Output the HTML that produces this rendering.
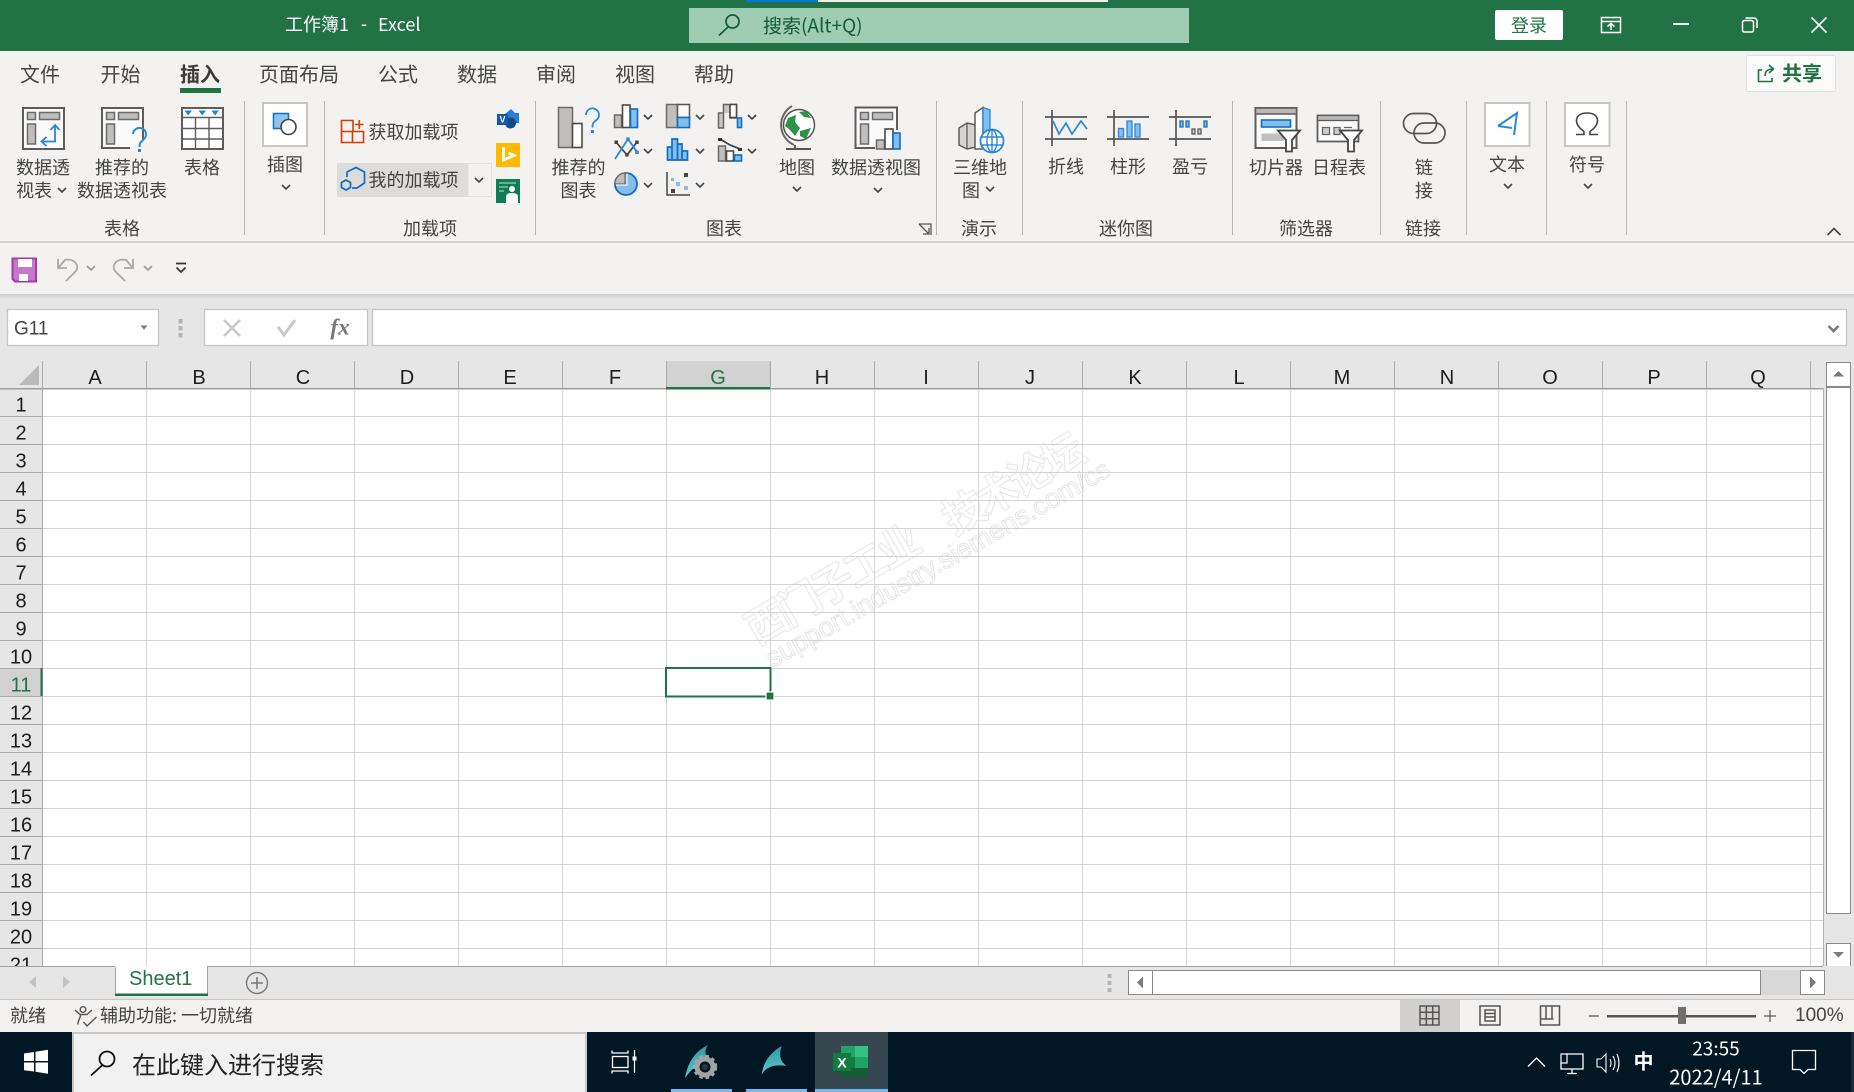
<!DOCTYPE html>
<html lang="zh-CN"><head><meta charset="utf-8"><title>工作簿1 - Excel</title>
<style>
html,body{margin:0;padding:0;background:#e6e6e6;width:1854px;height:1092px;overflow:hidden}
svg{display:block}
text{font-family:"Liberation Sans","Noto Sans CJK SC",sans-serif;dominant-baseline:central}
.c{font-family:"Noto Sans CJK SC","Liberation Sans",sans-serif;font-size:18px;fill:#444;text-anchor:middle}
.l{font-family:"Noto Sans CJK SC","Liberation Sans",sans-serif;font-size:18px;fill:#444}
.tab{font-family:"Noto Sans CJK SC","Liberation Sans",sans-serif;font-size:20px;fill:#444;text-anchor:middle}
.h{font-size:20px;fill:#1c1c1c;text-anchor:middle;dominant-baseline:auto}
.ic{fill:none;stroke:#5f5f5f;stroke-width:2}
.g{fill:#c0bfbe;stroke:#6a6a6a;stroke-width:1.5}
.w{fill:#fff;stroke:#4a4a4a;stroke-width:1.6}
.b{fill:#83beec;stroke:#106ebe;stroke-width:1.6}
.wm{font-family:"Noto Sans CJK SC",sans-serif;font-size:42px;font-weight:700;fill:#fff;stroke:#e6e6e6;stroke-width:1}
.wm2{font-size:27px;fill:#fff;stroke:#e6e6e6;stroke-width:1}
</style></head><body>
<svg width="1854" height="1092" viewBox="0 0 1854 1092" xmlns="http://www.w3.org/2000/svg">
<defs>
<path id="ch" d="M-4 -2 L0 2 L4 -2" fill="none" stroke="#444" stroke-width="1.6"/>
<clipPath id="gc"><rect x="0" y="388" width="1823" height="578"/></clipPath>
<linearGradient id="sh" x1="0" y1="0" x2="0" y2="1"><stop offset="0" stop-color="#cfcfcf"/><stop offset="1" stop-color="#e6e6e6"/></linearGradient>
<linearGradient id="fin" x1="0" y1="0" x2="0" y2="1"><stop offset="0" stop-color="#2f98a3"/><stop offset="1" stop-color="#62c5cc"/></linearGradient>
</defs>

<!-- title bar -->
<rect width="1854" height="51" fill="#217346"/>
<rect x="746" y="0" width="72" height="2" fill="#0078d4"/>
<rect x="818" y="0" width="290" height="2" fill="#f0f0f0"/>
<text x="285" y="24" font-size="18" fill="#fff" style="font-family:'Noto Sans CJK SC',sans-serif">工作簿1</text>
<text x="361" y="24" font-size="18" fill="#fff">-</text>
<text x="378" y="24" font-size="18" fill="#fff" style="font-family:'Noto Sans CJK SC',sans-serif">Excel</text>
<rect x="689" y="8" width="500" height="35" fill="#9fcdb3"/>
<circle cx="732.5" cy="21.5" r="6.5" fill="none" stroke="#14593a" stroke-width="1.7"/>
<path d="M728 27 L719 35.5" stroke="#14593a" stroke-width="1.7" fill="none"/>
<text x="763" y="25" font-size="19" fill="#14593a" style="font-family:'Noto Sans CJK SC',sans-serif">搜索(Alt+Q)</text>
<rect x="1495" y="10" width="68" height="30" rx="2" fill="#fff"/>
<text x="1529" y="25" font-size="18" fill="#217346" text-anchor="middle" style="font-family:'Noto Sans CJK SC',sans-serif">登录</text>
<g fill="none" stroke="#fff" stroke-width="1.5">
<rect x="1601.5" y="17.5" width="19" height="15"/><path d="M1601.5 21.5H1620.5M1611 30V23.5M1607.5 26.5L1611 23.5L1614.5 26.5"/>
<path d="M1673 24H1689" stroke-width="1.8"/>
<rect x="1742.5" y="20.5" width="11" height="11.5" rx="2"/><path d="M1745.5 18H1754a3 3 0 0 1 3 3V28"/>
<path d="M1811.5 17.5L1826.5 32.5M1826.5 17.5L1811.5 32.5" stroke-width="1.6"/>
</g>

<!-- ribbon -->
<rect y="51" width="1854" height="190" fill="#f3f2f1"/>
<rect y="241" width="1854" height="2" fill="#d2d0ce"/>
<rect y="243" width="1854" height="51" fill="#f3f2f1"/>
<rect y="294" width="1854" height="5" fill="url(#sh)"/>
<rect x="0" y="299" width="1854" height="62" fill="#e6e6e6"/>

<text class="tab" x="40" y="73">文件</text>
<text class="tab" x="120.500" y="73">开始</text>
<text class="tab" x="200" y="73" style="font-weight:700;fill:#3a3a3a">插入</text>
<rect x="180" y="88" width="41" height="5" fill="#217346"/>
<text class="tab" x="299" y="73">页面布局</text>
<text class="tab" x="398" y="73">公式</text>
<text class="tab" x="477" y="73">数据</text>
<text class="tab" x="556" y="73">审阅</text>
<text class="tab" x="635" y="73">视图</text>
<text class="tab" x="714" y="73">帮助</text>

<rect x="1746.500" y="55.500" width="89" height="36" rx="2" fill="#fbfbfb" stroke="#e1dfdd"/>
<path d="M1772 78V81.500H1758.500V70H1762M1765 76C1765 71 1768 69 1773 69M1769 65L1773.500 69L1769 73" fill="none" stroke="#217346" stroke-width="1.600"/>
<text x="1802" y="72" font-size="20" font-weight="700" fill="#217346" text-anchor="middle" style="font-family:'Noto Sans CJK SC',sans-serif">共享</text>

<!-- separators -->
<path d="M244.500 101V235M324.500 101V235M535.500 101V235M936.500 101V235M1022.500 101V235M1232.500 101V235M1380.500 101V235M1466.500 101V235M1546.500 101V235M1626.500 101V235" stroke="#b8b7b6" stroke-width="1"/>

<!-- pivot table icon -->
<rect x="23" y="108" width="41" height="41" fill="#fafafa" stroke="#5c5c5c" stroke-width="2"/>
<rect x="27.500" y="112.500" width="8" height="7" class="g"/><rect x="39.500" y="112.500" width="20" height="7" class="g"/><rect x="27.500" y="124" width="8" height="20" class="g"/>
<path d="M55 141.500V125.500M50.500 130L55 125L59.500 130M56 141.500H42M46.500 137L41.500 141.500L46.500 146" fill="none" stroke="#2b88d8" stroke-width="1.800"/>
<text class="c" x="43" y="167">数据透</text>
<text class="c" x="34" y="190">视表</text><use href="#ch" x="62" y="190"/>

<!-- recommended pivot -->
<path d="M143 139V108H102V148H130" fill="#fafafa" stroke="#5c5c5c" stroke-width="2"/>
<rect x="106.500" y="112.500" width="8" height="7" class="g"/><rect x="118.500" y="112.500" width="20" height="7" class="g"/><rect x="106.500" y="124" width="8" height="20" class="g"/>
<path d="M133 134a6.500 6.500 0 1 1 10.500 5.500c-3 2.800-4 3.800-4 7.500" fill="none" stroke="#2b88d8" stroke-width="2"/><rect x="138" y="149" width="3" height="3" fill="#2b88d8"/>
<text class="c" x="122" y="167">推荐的</text>
<text class="c" x="122" y="190">数据透视表</text>

<!-- table -->
<rect x="182" y="108" width="41" height="41" fill="#fff" stroke="#5c5c5c" stroke-width="2"/>
<path d="M182 117.500H223M182 128.500H223M182 139H223M195.500 117.500V149M209 117.500V149" stroke="#5c5c5c" stroke-width="1.400" fill="none"/>
<path d="M184.500 110.500H192L188.200 115.500ZM198.500 110.500H206L202.200 115.500ZM211.500 110.500H219L215.200 115.500Z" fill="#1e8ad6"/>
<text class="c" x="202" y="167">表格</text>
<text class="c" x="122" y="228">表格</text>

<!-- illustrations -->
<rect x="263" y="103" width="44" height="43" fill="#fff" stroke="#c8c6c4" stroke-width="2"/>
<rect x="273.500" y="113.500" width="15" height="15" fill="#90c4f0" stroke="#106ebe" stroke-width="1.500"/>
<circle cx="288.500" cy="127" r="7.500" fill="#fff" stroke="#444" stroke-width="1.600"/>
<text class="c" x="285" y="164">插图</text><use href="#ch" x="286" y="187"/>

<!-- add-ins -->
<path d="M341.500 120.500H353V131.500H363.500V142.500H341.500ZM341.500 131.500H353M352.500 131.500V142.500M355 124.500H363.500M359.300 120V129" fill="none" stroke="#d83b01" stroke-width="1.600"/>
<text class="l" x="368.500" y="131.500">获取加载项</text>
<rect x="337" y="163" width="131" height="34" fill="#dddcdb"/>
<rect x="468" y="163.500" width="23.500" height="33" fill="#f3f2f1" stroke="#e1dfdd"/>
<use href="#ch" x="479" y="180"/>
<path d="M347 177V172L356 167.500L364.500 172V183L357 188H352" fill="none" stroke="#106ebe" stroke-width="1.700"/>
<path d="M341.500 182.500L346 180L350.500 182.500V187.500L346 190L341.500 187.500Z" fill="none" stroke="#106ebe" stroke-width="1.700"/>
<text class="l" x="368.500" y="179.500">我的加载项</text>
<path d="M505 114L511 109L515 113H519V123H511Z" fill="#2b7cd3"/><circle cx="510.500" cy="123" r="5.500" fill="#0f4a8a"/><rect x="497" y="114" width="11" height="11" fill="#1457a8"/>
<text x="502.500" y="119.500" font-size="9" font-weight="700" fill="#fff" text-anchor="middle">V</text>
<rect x="496" y="143" width="24" height="24" fill="#ffb900"/>
<path d="M503.500 147V160L514 155.500L508.500 153" fill="none" stroke="#fff" stroke-width="2.800"/>
<rect x="496" y="179" width="24" height="24" fill="#107c57"/>
<path d="M499 183H516M499 187H508M499 191H504" stroke="#7fc4a8" stroke-width="1.500"/>
<circle cx="512" cy="189" r="3" fill="#fff"/><path d="M506 203V197Q506 193 512 193Q518 193 518 197V203Z" fill="#fff"/>
<text class="c" x="430" y="228">加载项</text>

<!-- charts -->
<rect x="558.500" y="107.500" width="14" height="40" class="g"/><rect x="572.500" y="123.500" width="9.500" height="24" class="w"/>
<path d="M586 115a6.500 6.500 0 1 1 10.500 5c-3 2.500-4 3-4 7.500" fill="none" stroke="#2b88d8" stroke-width="1.800"/><rect x="591" y="130" width="3" height="3" fill="#2b88d8"/>
<text class="c" x="578.500" y="167">推荐的</text><text class="c" x="578.500" y="190">图表</text>

<rect x="614.500" y="115" width="7" height="12.500" class="g"/><rect x="622.500" y="105" width="7.500" height="22.500" class="w"/><rect x="630.500" y="109" width="7" height="18.500" class="b"/>
<use href="#ch" x="648" y="117"/>
<path d="M616 142L627 155L637 142" fill="none" stroke="#444" stroke-width="1.700"/>
<rect x="614.500" y="140.500" width="3.500" height="3.500" fill="#444"/><rect x="625.200" y="153" width="3.500" height="3.500" fill="#444"/><rect x="635.200" y="140.500" width="3.500" height="3.500" fill="#444"/>
<path d="M615 159L628 139L637 152" fill="none" stroke="#2b88d8" stroke-width="1.800"/>
<rect x="626.200" y="137.500" width="3.500" height="3.500" fill="#2b88d8"/><rect x="635.200" y="150.500" width="3.500" height="3.500" fill="#2b88d8"/>
<use href="#ch" x="648" y="151"/>
<circle cx="626" cy="184" r="11" fill="#83beec" stroke="#106ebe" stroke-width="1.800"/>
<path d="M625 173V184H615A10.500 10.500 0 0 1 625 173Z" fill="#c0bfbe" stroke="#6a6a6a" stroke-width="1.300"/>
<path d="M616 185H627V173.500" fill="none" stroke="#f3f2f1" stroke-width="1.200"/>
<use href="#ch" x="648" y="185"/>

<rect x="666.500" y="104.500" width="11" height="23" class="g"/><rect x="677.500" y="104.500" width="12" height="13" fill="#fafafa" stroke="#555" stroke-width="1.500"/><rect x="677.500" y="117.500" width="12" height="10" class="b"/>
<use href="#ch" x="700" y="117"/>
<path d="M667.500 160V147H672V139H677.500V144H682V151H687.500V160ZM672 160V147M677.500 160V144M682 160V151" fill="#83beec" stroke="#106ebe" stroke-width="1.700"/>
<use href="#ch" x="700" y="151"/>
<path d="M667 172V195H690" fill="none" stroke="#444" stroke-width="1.500"/>
<rect x="684" y="173" width="4" height="4" fill="#444"/><rect x="671" y="189" width="4" height="4" fill="#444"/><rect x="671" y="178" width="3" height="3" fill="#83beec"/><rect x="676" y="182" width="4" height="4" fill="#83beec"/><rect x="684" y="186" width="4" height="4" fill="#83beec"/>
<use href="#ch" x="700" y="185"/>

<path d="M718.500 128V113H723.500V128ZM723.500 113V104.500H730V113M730 104.500H736.500V118H730Z" fill="#c8c6c4" stroke="#666" stroke-width="1.500"/>
<rect x="730" y="104.500" width="6.500" height="13" class="w"/>
<rect x="737.500" y="118" width="4" height="9.500" class="b"/>
<use href="#ch" x="752" y="117"/>
<path d="M720 139L730 145L740 149" fill="none" stroke="#444" stroke-width="1.800"/><rect x="718" y="138" width="4" height="3" fill="#333"/><rect x="738" y="148" width="4" height="3" fill="#333"/>
<rect x="718.500" y="146" width="7" height="15" class="g"/><rect x="726.500" y="151" width="7" height="10" class="w"/><rect x="734.500" y="155" width="7" height="6" class="b"/>
<use href="#ch" x="752" y="151"/>
<text class="c" x="724" y="228">图表</text>
<path d="M919 224H931V235M919 224L929 234M929 228V234H923" fill="none" stroke="#555" stroke-width="1.300"/>

<!-- map -->
<path d="M792 106A22 22 0 0 0 794 145" fill="none" stroke="#666" stroke-width="2"/>
<path d="M795 145V149M786 149H811" stroke="#555" stroke-width="2"/>
<circle cx="799" cy="125" r="15.500" fill="#fff" stroke="#555" stroke-width="1.500"/>
<path d="M788 118L796 115L795 122L800 128L795 136L790 130L785 126ZM799 112L806 111L811 118L804 117ZM800 131L811 128L806 139L800 136Z" fill="#2e9148"/>
<text class="c" x="797" y="167">地图</text><use href="#ch" x="797" y="189"/>

<!-- pivot chart -->
<path d="M897 130V107.500H855.500V148H875" fill="#fafafa" stroke="#5c5c5c" stroke-width="2"/>
<rect x="860.500" y="112.500" width="8" height="7" class="g"/><rect x="872.500" y="112.500" width="20" height="7" class="g"/><rect x="860.500" y="124" width="8" height="20" class="g"/>
<rect x="876.500" y="140" width="8" height="9" class="g"/><rect x="885" y="129" width="8" height="20" class="w"/><rect x="893" y="133" width="7" height="16" class="b"/>
<text class="c" x="876" y="167">数据透视图</text><use href="#ch" x="878" y="190"/>

<!-- 3d map -->
<path d="M959 128L967 123L976 125V147L967 149L959 145Z" fill="#d4d3d2" stroke="#5c5c5c" stroke-width="1.500"/><path d="M967 123V149" stroke="#5c5c5c" stroke-width="1.300"/>
<path d="M975 113L983 107.500V149H975Z" fill="#fff" stroke="#5c5c5c" stroke-width="1.500"/>
<path d="M983 107.500L990 110V133L983 136Z" fill="#83beec" stroke="#2b88d8" stroke-width="1.300"/>
<circle cx="992" cy="141" r="11.500" fill="#fff" stroke="#2b88d8" stroke-width="1.800"/>
<ellipse cx="992" cy="141" rx="5" ry="11" fill="none" stroke="#2b88d8" stroke-width="1.400"/>
<path d="M981 137H1003M981 145H1003M992 130V152" stroke="#2b88d8" stroke-width="1.400"/>
<text class="c" x="980" y="167">三维地</text><text class="c" x="971" y="190">图</text><use href="#ch" x="990" y="189"/>
<text class="c" x="979" y="228">演示</text>

<!-- sparklines -->
<path d="M1045 117H1087M1045 139H1087M1052 110V146M1107 117H1149M1107 139H1149M1114 110V146M1169 117H1211M1169 139H1211M1176 110V146" stroke="#555" stroke-width="1.700" fill="none"/>
<path d="M1053 121L1059 134L1066 123L1072 134L1081 121L1087 129" fill="none" stroke="#2b88d8" stroke-width="1.700"/>
<path d="M1118.500 128.500h5v8.500h-5ZM1127 121h5v16h-5ZM1135 124h5v13h-5Z" fill="#83beec" stroke="#2b88d8" stroke-width="1.300"/>
<path d="M1180 121h3v6h-3ZM1186 121h3v6h-3ZM1204 121h3v6h-3Z" fill="#83beec" stroke="#106ebe" stroke-width="1.300"/>
<path d="M1192 129h3v5h-3ZM1198 129h3v5h-3Z" fill="#ccc" stroke="#555" stroke-width="1.300"/>
<text class="c" x="1066" y="166">折线</text><text class="c" x="1128" y="166">柱形</text><text class="c" x="1190" y="166">盈亏</text>
<text class="c" x="1126" y="228">迷你图</text>

<!-- filters -->
<rect x="1255.500" y="108" width="41" height="40" fill="#fafafa" stroke="#5c5c5c" stroke-width="2"/>
<rect x="1255.500" y="108" width="41" height="6" fill="#b9b8b7" stroke="#5c5c5c" stroke-width="1.500"/>
<rect x="1261.500" y="120" width="29" height="7" fill="#83beec" stroke="#106ebe" stroke-width="1.600"/>
<rect x="1261.500" y="133.500" width="22" height="7.500" fill="#c0bfbe"/>
<path d="M1278 130.500H1300L1292 140V151.500H1286V140Z" fill="#fff" stroke="#444" stroke-width="1.800"/>
<rect x="1317.500" y="115.500" width="41" height="26" fill="#fafafa" stroke="#5c5c5c" stroke-width="1.800"/>
<rect x="1317.500" y="115.500" width="41" height="5" fill="#b9b8b7" stroke="#5c5c5c" stroke-width="1.300"/>
<path d="M1322.500 127.500h7v7h-7ZM1334 127.500h6v7h-6ZM1344 127.500h8" fill="#ccc" stroke="#666" stroke-width="1.300"/>
<path d="M1340 130.500H1362L1354 140V151.500H1348V140Z" fill="#fff" stroke="#444" stroke-width="1.800"/>
<text class="c" x="1276" y="167">切片器</text><text class="c" x="1339" y="167">日程表</text>
<text class="c" x="1306" y="228">筛选器</text>

<!-- link -->
<rect x="1403.500" y="113.500" width="33" height="20" rx="10" fill="none" stroke="#555" stroke-width="1.700"/>
<rect x="1414" y="123" width="31" height="20" rx="10" fill="none" stroke="#555" stroke-width="1.700"/>
<text class="c" x="1424" y="167">链</text><text class="c" x="1424" y="190">接</text><text class="c" x="1423" y="228">链接</text>

<!-- text / symbol -->
<rect x="1485" y="103" width="44.500" height="43" fill="#fff" stroke="#c8c6c4" stroke-width="2"/>
<path d="M1498 126L1517 113L1514 135M1498 126L1512 128" fill="none" stroke="#2b88d8" stroke-width="2"/>
<text class="c" x="1507" y="164">文本</text><use href="#ch" x="1508" y="186"/>
<rect x="1565" y="103" width="44.500" height="43" fill="#fff" stroke="#c8c6c4" stroke-width="2"/>
<path d="M1576 134.500H1584V131.500C1579 128 1576.500 124.500 1576.500 120.500C1576.500 115.500 1581 113 1587 113C1593 113 1597.500 115.500 1597.500 120.500C1597.500 124.500 1595 128 1590 131.500V134.500H1598" fill="none" stroke="#444" stroke-width="1.600"/>
<text class="c" x="1587" y="164">符号</text><use href="#ch" x="1588" y="186"/>
<path d="M1827.500 235L1834 228.500L1840.500 235" fill="none" stroke="#444" stroke-width="1.600"/>

<!-- QAT -->
<path d="M12.500 258.500H36V281.500H15L12.500 279Z" fill="#c679c9" stroke="#a33ba8" stroke-width="2"/>
<rect x="18" y="259" width="14" height="8" fill="#fff"/><rect x="19" y="274" width="9" height="7" fill="#fff"/>
<path d="M58 259V268H67M58 268L65 260C74 258 80 265 76 271L66 281" fill="none" stroke="#a9a9a9" stroke-width="1.800"/>
<use href="#ch" x="91" y="268" style="opacity:.5"/>
<path d="M133 259V268H124M133 268L126 260C117 258 111 265 115 271L125 281" fill="none" stroke="#a9a9a9" stroke-width="1.800"/>
<use href="#ch" x="148" y="268" style="opacity:.5"/>
<path d="M176 263.500H186M176.500 267.500L181 272L185.500 267.500" fill="none" stroke="#333" stroke-width="1.700"/>

<!-- formula bar -->
<rect x="7.500" y="309.500" width="151" height="36" fill="#fff" stroke="#c6c6c6" stroke-width="1.300"/>
<text x="14" y="329" font-size="19" fill="#444">G11</text>
<path d="M140.500 325.500H147.500L144 329.500Z" fill="#777"/>
<path d="M178.500 319h4v4.500h-4ZM178.500 326h4v4.500h-4ZM178.500 333h4v4.500h-4Z" fill="#b4b4b4"/>
<rect x="204.500" y="309.500" width="163" height="36" fill="#fff" stroke="#c6c6c6" stroke-width="1.300"/>
<path d="M224 320L240 336M240 320L224 336" stroke="#c8c8c8" stroke-width="2.600" fill="none"/>
<path d="M278 327L284 335L295 320" stroke="#c8c8c8" stroke-width="3" fill="none"/>
<text x="340" y="327" font-size="23" fill="#777" text-anchor="middle" font-style="italic" font-weight="700" style="font-family:'Liberation Serif',serif">fx</text>
<rect x="372.500" y="309.500" width="1474" height="36" fill="#fff" stroke="#c6c6c6" stroke-width="1.300"/>
<path d="M1828.500 326L1833.500 331L1838.500 326" fill="none" stroke="#777" stroke-width="2.600"/>

<!-- grid -->
<rect x="42" y="388" width="1781" height="578" fill="#fff"/>
<g>
<text class="wm" transform="translate(766,620) rotate(-30)" x="-21" y="0" style="letter-spacing:-4px">西门子工业</text>
<text class="wm" transform="translate(963,510) rotate(-30)" x="-21" y="0" style="letter-spacing:-4px">技术论坛</text>
<text class="wm2" transform="translate(768,660) rotate(-29.6)" x="0" y="0" textLength="391" lengthAdjust="spacingAndGlyphs">support.industry.siemens.com/cs</text>
</g>
<path d="M146.500 388V966M250.500 388V966M354.500 388V966M458.500 388V966M562.500 388V966M666.500 388V966M770.500 388V966M874.500 388V966M978.500 388V966M1082.500 388V966M1186.500 388V966M1290.500 388V966M1394.500 388V966M1498.500 388V966M1602.500 388V966M1706.500 388V966M1810.500 388V966" stroke="#d4d4d4" stroke-width="1" fill="none"/>
<path d="M42 416.500H1823M42 444.500H1823M42 472.500H1823M42 500.500H1823M42 528.500H1823M42 556.500H1823M42 584.500H1823M42 612.500H1823M42 640.500H1823M42 668.500H1823M42 696.500H1823M42 724.500H1823M42 752.500H1823M42 780.500H1823M42 808.500H1823M42 836.500H1823M42 864.500H1823M42 892.500H1823M42 920.500H1823M42 948.500H1823" stroke="#d4d4d4" stroke-width="1" fill="none"/>

<!-- headers -->
<rect x="666" y="361" width="104" height="27" fill="#d2d2d2"/>
<rect x="0" y="668" width="42" height="28" fill="#d2d2d2"/>
<path d="M42.500 361V966M146.500 361V388M250.500 361V388M354.500 361V388M458.500 361V388M562.500 361V388M666.500 361V388M770.500 361V388M874.500 361V388M978.500 361V388M1082.500 361V388M1186.500 361V388M1290.500 361V388M1394.500 361V388M1498.500 361V388M1602.500 361V388M1706.500 361V388M1810.500 361V388" stroke="#a9a9a9" fill="none"/>
<path d="M0 416.500H42M0 444.500H42M0 472.500H42M0 500.500H42M0 528.500H42M0 556.500H42M0 584.500H42M0 612.500H42M0 640.500H42M0 668.500H42M0 696.500H42M0 724.500H42M0 752.500H42M0 780.500H42M0 808.500H42M0 836.500H42M0 864.500H42M0 892.500H42M0 920.500H42M0 948.500H42" stroke="#a9a9a9" fill="none"/>
<rect x="0" y="388" width="1823" height="1.500" fill="#9f9f9f"/>
<rect x="666" y="387" width="104" height="2.500" fill="#217346"/>
<rect x="40.500" y="668" width="2" height="28" fill="#217346"/>
<path d="M19 385L39 365V385Z" fill="#b9b9b9"/>
<g>
<text class="h" x="95" y="384">A</text><text class="h" x="199" y="384">B</text><text class="h" x="303" y="384">C</text><text class="h" x="407" y="384">D</text><text class="h" x="510" y="384">E</text><text class="h" x="615" y="384">F</text><text class="h" x="718" y="384" style="fill:#217346">G</text><text class="h" x="822" y="384">H</text><text class="h" x="926" y="384">I</text><text class="h" x="1030" y="384">J</text><text class="h" x="1135" y="384">K</text><text class="h" x="1239" y="384">L</text><text class="h" x="1342" y="384">M</text><text class="h" x="1447" y="384">N</text><text class="h" x="1550" y="384">O</text><text class="h" x="1654" y="384">P</text><text class="h" x="1758" y="384">Q</text>
</g>
<g clip-path="url(#gc)">
<text class="h" x="21" y="411.500">1</text><text class="h" x="21" y="439.500">2</text><text class="h" x="21" y="467.500">3</text><text class="h" x="21" y="495.500">4</text><text class="h" x="21" y="523.500">5</text><text class="h" x="21" y="551.500">6</text><text class="h" x="21" y="579.500">7</text><text class="h" x="21" y="607.500">8</text><text class="h" x="21" y="635.500">9</text><text class="h" x="21" y="663.500">10</text><text class="h" x="21" y="691.500" style="fill:#217346">11</text><text class="h" x="21" y="719.500">12</text><text class="h" x="21" y="747.500">13</text><text class="h" x="21" y="775.500">14</text><text class="h" x="21" y="803.500">15</text><text class="h" x="21" y="831.500">16</text><text class="h" x="21" y="859.500">17</text><text class="h" x="21" y="887.500">18</text><text class="h" x="21" y="915.500">19</text><text class="h" x="21" y="943.500">20</text><text class="h" x="21" y="971.500">21</text>
</g>

<!-- selection -->
<rect x="666" y="668" width="104.500" height="28.500" fill="none" stroke="#217346" stroke-width="2"/>
<rect x="766" y="692" width="8" height="8" fill="#217346" stroke="#fff" stroke-width="1.200"/>

<!-- vertical scrollbar -->
<rect x="1823" y="361" width="31" height="606" fill="#e6e6e6"/>
<rect x="1823" y="388" width="1" height="578" fill="#b5b5b5"/>
<rect x="1826.500" y="362.500" width="24" height="24" fill="#fff" stroke="#8a8a8a"/>
<path d="M1833 376.500L1838.500 371L1844 376.500Z" fill="#7a7a7a"/>
<rect x="1826.500" y="387.500" width="24" height="526" fill="#fff" stroke="#8a8a8a"/>
<rect x="1826.500" y="943.500" width="24" height="23" fill="#fff" stroke="#8a8a8a"/>
<path d="M1833 952L1838.500 957.500L1844 952Z" fill="#7a7a7a"/>

<!-- sheet tabs -->
<rect x="0" y="966" width="1854" height="34" fill="#e6e6e6"/>
<rect x="0" y="966" width="1823" height="1" fill="#a0a0a0"/>
<rect x="0" y="999" width="1854" height="1.500" fill="#c6c6c6"/>
<path d="M36 976V988L29 982ZM63 976V988L70 982Z" fill="#c4c4c4"/>
<path d="M115.500 966V995H207.500V966" fill="#fff" stroke="#a0a0a0"/>
<rect x="115" y="966.500" width="92" height="1" fill="#fff"/>
<rect x="115" y="993.500" width="93" height="2.500" fill="#217346"/>
<text x="129" y="979" font-size="20" fill="#217346">Sheet1</text>
<circle cx="257" cy="983" r="10.500" fill="none" stroke="#777" stroke-width="1.400"/>
<path d="M251 983H263M257 977V989" stroke="#777" stroke-width="1.500"/>
<path d="M1107.500 974h4v4h-4ZM1107.500 981h4v4h-4ZM1107.500 988h4v4h-4Z" fill="#b4b4b4"/>
<rect x="1128.500" y="970.500" width="24" height="24" fill="#fff" stroke="#8a8a8a"/>
<path d="M1143 976.500V988.500L1137 982.500Z" fill="#7a7a7a"/>
<rect x="1152.500" y="970.500" width="608" height="24" fill="#fff" stroke="#8a8a8a"/>
<rect x="1761" y="970" width="39" height="25" fill="#d8d8d8"/>
<rect x="1800.500" y="970.500" width="24" height="24" fill="#fff" stroke="#8a8a8a"/>
<path d="M1810 976.500V988.500L1816 982.500Z" fill="#7a7a7a"/>

<!-- status bar -->
<rect x="0" y="1000" width="1854" height="32" fill="#f3f2f1"/>
<text class="l" x="10" y="1015">就绪</text>
<circle cx="83" cy="1009.500" r="2.800" fill="none" stroke="#555" stroke-width="1.400"/>
<path d="M75 1010L80 1014.500H87L92 1010M80.500 1014.500C81 1018 77.500 1020 78 1024.500M83.500 1022L87 1026L96.500 1017" fill="none" stroke="#555" stroke-width="1.400"/>
<text class="l" x="100" y="1015">辅助功能: 一切就绪</text>
<rect x="1400" y="1000" width="60" height="32" fill="#d2d0ce"/>
<path d="M1420 1006h19v19h-19ZM1426.300 1006v19M1432.700 1006v19M1420 1012.300h19M1420 1018.700h19" fill="none" stroke="#555" stroke-width="1.500"/>
<path d="M1480 1006h20v19h-20ZM1485 1010h10v11h-10ZM1485 1013.500h10M1485 1017h10" fill="none" stroke="#555" stroke-width="1.500"/>
<path d="M1540.500 1006h19v19h-19ZM1546 1006v13M1552 1006v13M1540.500 1019h13" fill="none" stroke="#555" stroke-width="1.500"/>
<path d="M1589 1016h10M1764 1016h12M1770 1010v12" stroke="#555" stroke-width="1.200"/>
<rect x="1607" y="1015" width="149" height="2.500" fill="#555"/>
<rect x="1678" y="1007" width="8" height="17" fill="#6f6f6f"/>
<text x="1795" y="1015.500" font-size="19" fill="#444">100%</text>

<!-- taskbar -->
<rect x="0" y="1032" width="1854" height="60" fill="#021724"/>
<rect x="1851" y="1032" width="3" height="60" fill="#1c2a35"/>
<path d="M24 1053.500L34 1052V1061H24ZM35.500 1051.700L48 1049.800V1061H35.500ZM24 1062.500H34V1071.500L24 1070.200ZM35.500 1062.500H48V1073.800L35.500 1071.800Z" fill="#fff"/>
<rect x="72" y="1032" width="515" height="60" fill="#c8c8c8"/>
<rect x="74" y="1034" width="511" height="58" fill="#f1f1f1"/>
<circle cx="107" cy="1059" r="7.500" fill="none" stroke="#111" stroke-width="1.800"/>
<path d="M102.500 1065L91 1075.500" stroke="#111" stroke-width="1.800"/>
<text x="132" y="1063" font-size="24" fill="#222" style="font-family:'Noto Sans CJK SC',sans-serif">在此键入进行搜索</text>

<path d="M612 1050.500V1053H628V1050.500M612 1073.500V1071H628V1073.500" fill="none" stroke="#fff" stroke-width="1.300"/>
<rect x="612.500" y="1056.500" width="15.500" height="11" fill="none" stroke="#fff" stroke-width="1.300"/>
<path d="M634.500 1050V1073" stroke="#fff" stroke-width="1.200"/><rect x="632.500" y="1056.500" width="4" height="4" fill="#fff"/>

<path d="M708 1045Q689 1054 685 1078Q695 1064 708 1059Q703 1052 708 1045Z" fill="url(#fin)"/>
<circle cx="705" cy="1067" r="8" fill="none" stroke="#a3a3a3" stroke-width="5"/>
<circle cx="705" cy="1067" r="11" fill="none" stroke="#a5a5a5" stroke-width="2.500" stroke-dasharray="3.500 3"/>
<circle cx="705" cy="1067" r="3" fill="#2a353c"/>
<path d="M781.700 1046Q764 1056 761.700 1074.700Q768 1063 786.700 1066Q777 1060 781.700 1046Z" fill="url(#fin)"/>

<rect x="815" y="1032" width="73" height="60" fill="#37474f"/>
<rect x="671" y="1089" width="61" height="3" fill="#76b9ed"/><rect x="746" y="1089" width="61" height="3" fill="#76b9ed"/><rect x="815" y="1089" width="73" height="3" fill="#76b9ed"/>
<rect x="841" y="1046" width="14" height="11" fill="#21a366"/><rect x="855" y="1046" width="13" height="11" fill="#33c481"/>
<rect x="841" y="1057" width="14" height="11" fill="#107c41"/><rect x="855" y="1057" width="13" height="11" fill="#21a366"/>
<rect x="841" y="1068" width="27" height="10" fill="#185c37"/>
<rect x="833" y="1053" width="18" height="18" rx="1.500" fill="#107c41"/>
<text x="842" y="1062.500" font-size="14" font-weight="700" fill="#fff" text-anchor="middle">X</text>

<path d="M1528 1066.500L1536.500 1058L1545 1066.500" fill="none" stroke="#fff" stroke-width="1.300"/>
<path d="M1566 1054H1583V1069H1561V1063M1572 1069V1073M1567 1073.500H1577" fill="none" stroke="#fff" stroke-width="1.300"/>
<rect x="1561" y="1054" width="6" height="9" fill="none" stroke="#fff" stroke-width="1.200"/>
<path d="M1597 1059H1601L1606 1054V1072L1601 1067H1597ZM1610 1059Q1612 1063 1610 1067M1613 1056Q1617 1063 1613 1070M1617 1054Q1621 1063 1617 1072" fill="none" stroke="#fff" stroke-width="1.100"/>
<text x="1643.500" y="1060" font-size="20" fill="#fff" font-weight="700" text-anchor="middle" style="font-family:'Noto Sans CJK SC',sans-serif">中</text>
<text x="1716" y="1048" font-size="19" fill="#fff" text-anchor="middle" style="font-family:'Noto Sans CJK SC',sans-serif">23:55</text>
<text x="1716" y="1076" font-size="20" fill="#fff" text-anchor="middle" style="font-family:'Noto Sans CJK SC',sans-serif">2022/4/11</text>
<path d="M1792.500 1050.500H1815.500V1069.500H1808L1804 1073.500L1800 1069.500H1792.500Z" fill="none" stroke="#fff" stroke-width="1.300"/>
</svg>
</body></html>
